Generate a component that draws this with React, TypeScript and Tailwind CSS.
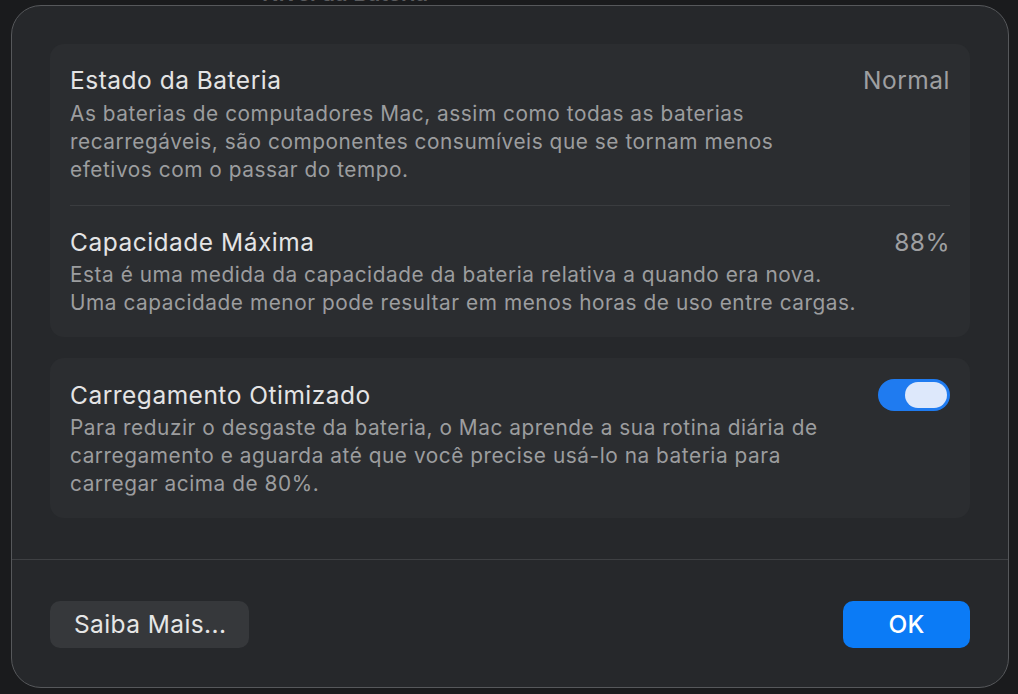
import React from "react";

const font = { fontFamily: "Inter, 'Noto Sans', sans-serif" };

function Toggle() {
  return (
    <div className="w-[72px] h-[32px] rounded-full bg-[#1f7bf0] flex items-center justify-end pr-[3px] shrink-0">
      <div className="w-[42px] h-[26px] rounded-full bg-[#dde8fb]" />
    </div>
  );
}

const title = "text-[24.5px] leading-[28px] tracking-[0.5px] text-[#e4e4e5]";
const value = "text-[24.5px] leading-[28px] tracking-[0.5px] text-[#9e9fa1]";
const desc = "text-[20.8px] leading-[28px] tracking-[0.55px] text-[#9c9d9f]";

export default function App() {
  return (
    <div
      className="w-[1018px] h-[694px] bg-[#1a1b1d] overflow-hidden flex flex-col"
      style={font}
    >
      <div className="h-[5px] overflow-hidden pl-[262px]">
        <div className="-mt-[19px] text-[22px] leading-[24px] text-[#5a5b5e] font-semibold">
          Nível da Bateria
        </div>
      </div>
      <div className="flex pl-[11px]">
        <div className="w-[998px] h-[683px] rounded-[30px] border border-[#56585b] bg-[#26282b] flex flex-col">
          <div className="px-[38px] pt-[38px] flex flex-col gap-[21px]">
            <div className="rounded-[14px] bg-[#2b2d30] px-[20px] pt-[22px] pb-[20px]">
              <div className="flex justify-between items-center">
                <span className={title}>Estado da Bateria</span>
                <span className={value}>Normal</span>
              </div>
              <p className={"mt-[6px] " + desc}>
                As baterias de computadores Mac, assim como todas as baterias
                <br />
                recarregáveis, são componentes consumíveis que se tornam menos
                <br />
                efetivos com o passar do tempo.
              </p>
              <div className="h-px bg-[#3a3c3f] mt-[21px] mb-[22px]" />
              <div className="flex justify-between items-center">
                <span className={title}>Capacidade Máxima</span>
                <span className={value}>88%</span>
              </div>
              <p className={"mt-[5px] " + desc}>
                Esta é uma medida da capacidade da bateria relativa a quando era nova.
                <br />
                Uma capacidade menor pode resultar em menos horas de uso entre cargas.
              </p>
            </div>
            <div className="rounded-[14px] bg-[#2b2d30] px-[20px] pt-[23px] pb-[20px]">
              <div className="flex justify-between items-center h-[28px]">
                <span className={title}>Carregamento Otimizado</span>
                <Toggle />
              </div>
              <p className={"mt-[5px] " + desc}>
                Para reduzir o desgaste da bateria, o Mac aprende a sua rotina diária de
                <br />
                carregamento e aguarda até que você precise usá-lo na bateria para
                <br />
                carregar acima de 80%.
              </p>
            </div>
          </div>
          <div className="mt-[41px] h-px bg-[#3e4043]" />
          <div className="px-[38px] pt-[41px] flex justify-between">
            <button className="w-[199px] h-[47px] rounded-[10px] bg-[#36383b] text-[24.5px] tracking-[0.4px] text-[#e6e6e6] text-left pl-[24px]">
              Saiba Mais...
            </button>
            <button className="w-[127px] h-[47px] rounded-[10px] bg-[#0b7bf6] text-[24.5px] tracking-[0.3px] text-white font-medium">
              OK
            </button>
          </div>
        </div>
      </div>
    </div>
  );
}
